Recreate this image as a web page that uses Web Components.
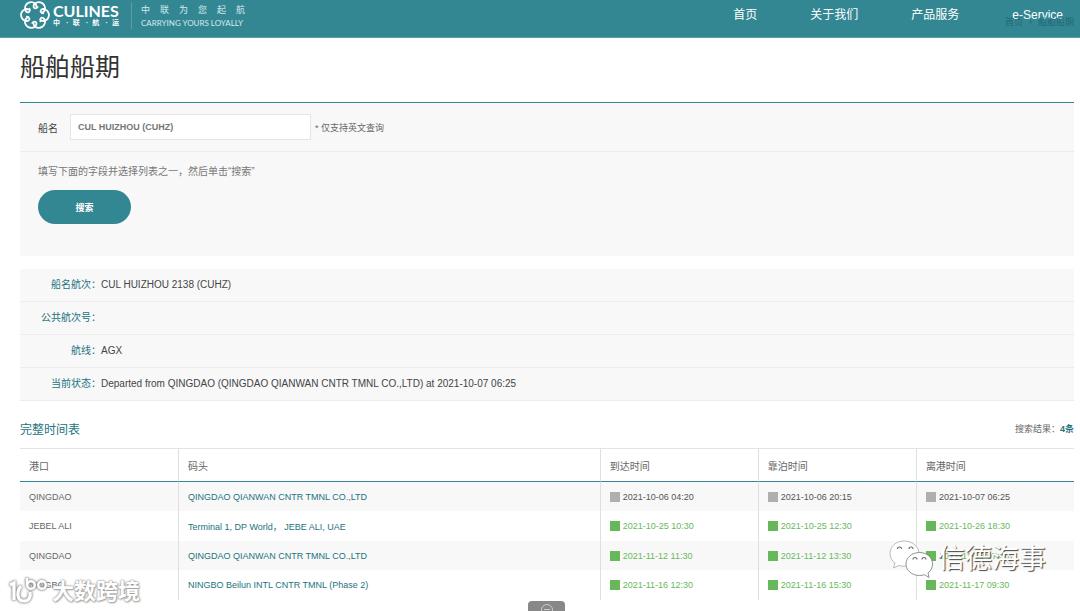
<!DOCTYPE html>
<html lang="zh-CN">
<head>
<meta charset="utf-8">
<title>船舶船期</title>
<style>
	html{
		--teal: #338793;
		--teal-text: #23737e;
		--panel: #f8f8f8;
		--line: #ececec;
		--green: #67b85b;
	}
	body{
		margin: 0;
		min-height: 100vh;
		position: relative;
		overflow-x: hidden;
		background: #fff;
		color: #666;
		font-family: "Liberation Sans", "Noto Sans CJK SC", sans-serif;
		font-size: 10px;
	}
</style>
</head>
<body>

<template id="brand_logo_tpl">
	<style>
		:host{
			display: flex;
			align-items: center;
			color: #fff;
		}
		a{
			display: flex;
			align-items: center;
			gap: 3px;
			color: inherit;
			text-decoration: none;
		}
		svg{
			width: 30px;
			height: 30px;
		}
		.name{
			width: 66px;
			font: 700 16px/16px Lato, sans-serif;
		}
		.cn{
			font-size: 7px;
			font-weight: 700;
			line-height: 8px;
			text-align-last: justify;
		}
		.slogan{
			margin-left: 12px;
			padding-left: 9px;
			border-left: 1px solid #5b9ea8;
			width: 104px;
			line-height: 13px;
			padding-top: 2px;
			color: #d6e9ec;
		}
		.slogan .zh{
			font-size: 9px;
			text-align-last: justify;
		}
		.slogan .en{
			font: 8px/12px Lato, sans-serif;
			white-space: nowrap;
		}
	</style>
	<a href="#">
		<svg viewBox="-15 -15 30 30" fill="none" stroke="#fff" stroke-width="1.8" stroke-linecap="round">
			<defs><path id="petal" d="M8.2 -1.6C5.8 -1.8 4.8 -4.2 6.4 -5.4C8.4 -6.8 11.600 -5.600 13 -3.200C14.200 -1.200 14.200 1.200 13 3.200C11.600 5.600 8.400 6.800 6.400 5.400"/></defs>
			<use href="#petal"/>
			<use href="#petal" transform="rotate(60)"/>
			<use href="#petal" transform="rotate(120)"/>
			<use href="#petal" transform="rotate(180)"/>
			<use href="#petal" transform="rotate(240)"/>
			<use href="#petal" transform="rotate(300)"/>
		</svg>
		<div>
			<div class="name">CULINES</div>
			<div class="cn">中 · 联 · 航 · 运</div>
		</div>
	</a>
	<div class="slogan">
		<div class="zh">中 联 为 您 起 航</div>
		<div class="en">CARRYING YOURS LOYALLY</div>
	</div>
</template>

<template id="site_header_tpl">
	<style>
		:host{
			display: block;
			position: relative;
			background: var(--teal);
			border-bottom: 1px solid #5fa1aa;
		}
		header{
			display: flex;
			justify-content: space-between;
			align-items: flex-start;
			height: 37px;
			padding: 0 17px 0 20px;
			box-sizing: border-box;
		}
		nav{
			display: flex;
			gap: 53px;
			padding-top: 7px;
		}
		::slotted(a){
			color: #fff;
			font-size: 12px;
			line-height: 16px;
			text-decoration: none;
			white-space: nowrap;
		}
		/* the breadcrumb shows through the bar, under the menu */
		.crumbs{
			position: absolute;
			right: 6px;
			top: 16px;
			display: flex;
			gap: 6px;
			font-size: 9px;
			line-height: 12px;
			color: #216874;
		}
	</style>
	<div class="crumbs"><slot name="crumb"></slot></div>
	<header>
		<brand-logo></brand-logo>
		<nav><slot></slot></nav>
	</header>
</template>

<template id="search_panel_tpl">
	<style>
		:host{
			display: block;
			background: var(--panel);
			border-top: 1px solid var(--teal);
		}
		.field{
			display: flex;
			align-items: center;
			padding: 11px 18px;
			border-bottom: 1px solid var(--line);
		}
		label{
			width: 32px;
			color: #444;
		}
		input{
			width: 241px;
			height: 26px;
			padding: 0 7px;
			box-sizing: border-box;
			border: 1px solid #e6e6e6;
			background: #fff;
			color: #777;
			font: 700 9px "Liberation Sans", sans-serif;
		}
		.note{
			margin-left: 4px;
			font-size: 9px;
		}
		.actions{
			padding: 12px 18px 32px;
		}
		p{
			margin: 0 0 10px;
			line-height: 16px;
			color: #777;
		}
		button{
			display: block;
			width: 93px;
			height: 34px;
			border: 0;
			border-radius: 17px;
			background: var(--teal);
			color: #fff;
			font: 700 9px "Liberation Sans", "Noto Sans CJK SC", sans-serif;
		}
	</style>
	<form>
		<div class="field">
			<label for="vessel">船名</label>
			<input id="vessel" type="text">
			<span class="note">* 仅支持英文查询</span>
		</div>
		<div class="actions">
			<p><slot></slot></p>
			<button type="button">搜索</button>
		</div>
	</form>
</template>

<template id="info_row_tpl">
	<style>
		:host{
			display: flex;
			align-items: center;
			height: 32px;
			line-height: 16px;
			background: var(--panel);
			border-bottom: 1px solid var(--line);
			color: #444;
		}
		.label{
			width: 81px;
			flex: none;
			text-align: right;
			color: var(--teal-text);
		}
	</style>
	<span class="label"></span>
	<span><slot></slot></span>
</template>

<template id="time_cell_tpl">
	<style>
		:host{
			display: flex;
			align-items: center;
			gap: 3px;
			color: var(--green);
			white-space: nowrap;
		}
		:host([past]){
			color: #555;
		}
		i{
			width: 10px;
			height: 10px;
			background: var(--green);
		}
		:host([past]) i{
			background: #afafaf;
		}
	</style>
	<i></i><span><slot></slot></span>
</template>

<template id="schedule_table_tpl">
	<style>
		:host{
			display: block;
		}
		.head{
			display: flex;
			justify-content: space-between;
			align-items: center;
			height: 20px;
			margin-bottom: 10px;
		}
		h2{
			margin: 0;
			font-size: 12px;
			font-weight: 400;
			color: var(--teal-text);
		}
		.total{
			font-size: 9px;
		}
		.total b{
			color: var(--teal-text);
		}
		table{
			width: 100%;
			table-layout: fixed;
			border-collapse: separate;
			border-spacing: 0;
			font-size: 9px;
		}
		th, td{
			padding: 0 9px;
			text-align: left;
			font-weight: 400;
			white-space: nowrap;
		}
		th + th, td + td{
			border-left: 1px solid #dfdfe2;
		}
		th{
			width: 15%;
			height: 34px;
			box-sizing: border-box;
			border-top: 1px solid #e4e4e4;
			border-bottom: 1px solid var(--teal);
			font-size: 10px;
		}
		th.wide{
			width: 40%;
		}
		td{
			height: 29px;
		}
		tr:nth-child(even) td{
			height: 30px;
		}
		tbody tr:nth-child(odd){
			background: var(--panel);
		}
		td a{
			color: var(--teal-text);
			text-decoration: none;
		}
	</style>
	<div class="head">
		<h2>完整时间表</h2>
		<div class="total">搜索结果：<b></b></div>
	</div>
	<table>
		<thead>
			<tr><th>港口</th><th class="wide">码头</th><th>到达时间</th><th>靠泊时间</th><th>离港时间</th></tr>
		</thead>
		<tbody></tbody>
	</table>
</template>

<template id="account_mark_tpl">
	<style>
		:host{
			display: flex;
			align-items: center;
			gap: 5px;
			color: #fff;
			font-size: 27px;
			line-height: 40px;
			text-shadow: 1px 1px 1px #444;
			white-space: nowrap;
		}
		svg{
			width: 44px;
			height: 40px;
		}
		span{
			padding-bottom: 2px;
		}
	</style>
	<svg viewBox="0 0 44 40" fill="#fff" stroke="#aaa" stroke-width=".8">
		<path d="M15 1C7 1 1 6.500 1 13.500C1 17.500 3 21 6 23L4.500 28L10 25.500C11.500 26 13.500 26.200 15 26.200C23 26.200 30 20.500 30 13.500C30 6.500 23 1 15 1Z"/>
		<path stroke="#777" d="M30.500 12.500C23 12.500 17 17.500 17 24C17 30.500 23 35.500 30.500 35.500C32.300 35.500 34 35.200 35.500 34.700L40 37.500L39 32.800C42 30.700 43.500 27.500 43.500 24C43.500 17.500 38 12.500 30.500 12.500Z"/>
		<path fill="none" stroke="#666" stroke-width="1.100" d="M8.500 9a2 2 0 0 1 4 0M20 9a2 2 0 0 1 4 0M24 19.500a2 2 0 0 1 4 0M33 19.500a2 2 0 0 1 4 0"/>
	</svg>
	<span><slot></slot></span>
</template>

<template id="source_mark_tpl">
	<style>
		:host{
			display: flex;
			align-items: center;
			gap: 1px;
			color: #fff;
			font-size: 22px;
			font-weight: 700;
			line-height: 28px;
			text-shadow: 0 0 2px #999, 0 0 2px #999, 1px 1px 2px #aaa;
			white-space: nowrap;
		}
		svg{
			width: 42px;
			height: 30px;
			filter: drop-shadow(0 0 1px #888) drop-shadow(0 0 1px #aaa);
		}
	</style>
	<svg viewBox="0 0 42 30" fill="none" stroke="#fff" stroke-width="3.200">
		<path d="M1 8L5 6V23"/>
		<path d="M12 9C7 15 8 24 15 24C20 24 22 20 21 15"/>
		<path d="M18 1V8" stroke-width="2.500"/>
		<circle cx="22" cy="8" r="3.800" stroke-width="2.400"/>
		<circle cx="33" cy="8" r="3.800" stroke-width="2.400"/>
	</svg>
	<slot></slot>
</template>

<template id="page_view_tpl">
	<style>
		:host{
			display: block;
		}
		main{
			display: flex;
			flex-direction: column;
			padding: 0 6px 0 20px;
		}
		h1{
			margin: 0;
			padding: 11px 0 17px;
			font-size: 25px;
			line-height: 36px;
			font-weight: 400;
			color: #333;
		}
		.voyage{
			margin: 13px 0 17px;
		}
		/* overlays on top of the page */
		account-mark{
			position: absolute;
			right: 34px;
			bottom: 30px;
		}
		source-mark{
			position: absolute;
			left: 9px;
			bottom: 4px;
		}
		.pull{
			position: absolute;
			bottom: 0;
			left: calc(50% - 12px);
			width: 37px;
			height: 10px;
			padding: 0;
			border: 0;
			border-radius: 4px 4px 0 0;
			background: #888;
			overflow: hidden;
		}
		.pull svg{
			display: block;
			margin: 0 auto;
		}
	</style>
	<slot name="header"></slot>
	<main>
		<h1><slot name="title"></slot></h1>
		<slot name="search"></slot>
		<div class="voyage"><slot name="voyage"></slot></div>
		<slot></slot>
	</main>
	<account-mark>信德海事</account-mark>
	<source-mark>大数跨境</source-mark>
	<button class="pull" type="button" aria-label="展开">
		<svg width="14" height="10" fill="none" stroke="#ccc"><circle cx="7" cy="9" r="5.500"/><path d="M4 8.500H10"/></svg>
	</button>
</template>

<page-view>
	<site-header slot="header">
		<a href="#">首页</a>
		<a href="#">关于我们</a>
		<a href="#">产品服务</a>
		<a href="#">e-Service</a>
		<span slot="crumb">首页</span>
		<span slot="crumb">›</span>
		<span slot="crumb">船舶船期</span>
	</site-header>
	<span slot="title">船舶船期</span>
	<search-panel slot="search" value="CUL HUIZHOU (CUHZ)">填写下面的字段并选择列表之一，然后单击“搜索”</search-panel>
	<info-row slot="voyage" label="船名航次：">CUL HUIZHOU 2138 (CUHZ)</info-row>
	<info-row slot="voyage" label="公共航次号："></info-row>
	<info-row slot="voyage" label="航线：">AGX</info-row>
	<info-row slot="voyage" label="当前状态：">Departed from QINGDAO (QINGDAO QIANWAN CNTR TMNL CO.,LTD) at 2021-10-07 06:25</info-row>
	<schedule-table></schedule-table>
</page-view>

<script>
	(function(){
		'use strict';

		const calls = [
			{ port: 'QINGDAO', terminal: 'QINGDAO QIANWAN CNTR TMNL CO.,LTD', past: true,
				times: ['2021-10-06 04:20', '2021-10-06 20:15', '2021-10-07 06:25'] },
			{ port: 'JEBEL ALI', terminal: 'Terminal 1, DP World， JEBE ALI, UAE',
				times: ['2021-10-25 10:30', '2021-10-25 12:30', '2021-10-26 18:30'] },
			{ port: 'QINGDAO', terminal: 'QINGDAO QIANWAN CNTR TMNL CO.,LTD',
				times: ['2021-11-12 11:30', '2021-11-12 13:30', '2021-11-13 07:30'] },
			{ port: 'NINGBO', terminal: 'NINGBO Beilun INTL CNTR TMNL (Phase 2)',
				times: ['2021-11-16 12:30', '2021-11-16 15:30', '2021-11-17 09:30'] }
		];

		class BaseElement extends HTMLElement {
			constructor(){
				super();
				const id = this.localName.replace('-', '_') + '_tpl';
				const tpl = document.getElementById(id);
				this.attachShadow({mode:'open'}).appendChild(document.importNode(tpl.content, true));
			}
		}

		class BrandLogo extends BaseElement {}
		class SiteHeader extends BaseElement {}
		class TimeCell extends BaseElement {}
		class AccountMark extends BaseElement {}
		class SourceMark extends BaseElement {}
		class PageView extends BaseElement {}

		class SearchPanel extends BaseElement {
			connectedCallback(){
				this.shadowRoot.getElementById('vessel').value = this.getAttribute('value') || '';
			}
		}

		class InfoRow extends BaseElement {
			connectedCallback(){
				this.shadowRoot.querySelector('.label').textContent = this.getAttribute('label');
			}
		}

		class ScheduleTable extends BaseElement {
			connectedCallback(){
				this.render(calls);
			}

			render( rows ){
				this.shadowRoot.querySelector('.total b').textContent = rows.length + '条';
				this.shadowRoot.querySelector('tbody').innerHTML = rows.map((row) => `
					<tr>
						<td>${row.port}</td>
						<td><a href="#">${row.terminal}</a></td>
						${row.times.map((t) => `<td><time-cell ${row.past ? 'past' : ''}>${t}</time-cell></td>`).join('')}
					</tr>`).join('');
			}
		}

		customElements.define('brand-logo', BrandLogo);
		customElements.define('site-header', SiteHeader);
		customElements.define('time-cell', TimeCell);
		customElements.define('account-mark', AccountMark);
		customElements.define('source-mark', SourceMark);
		customElements.define('search-panel', SearchPanel);
		customElements.define('info-row', InfoRow);
		customElements.define('schedule-table', ScheduleTable);
		customElements.define('page-view', PageView);
	})();
</script>
</body>
</html>
